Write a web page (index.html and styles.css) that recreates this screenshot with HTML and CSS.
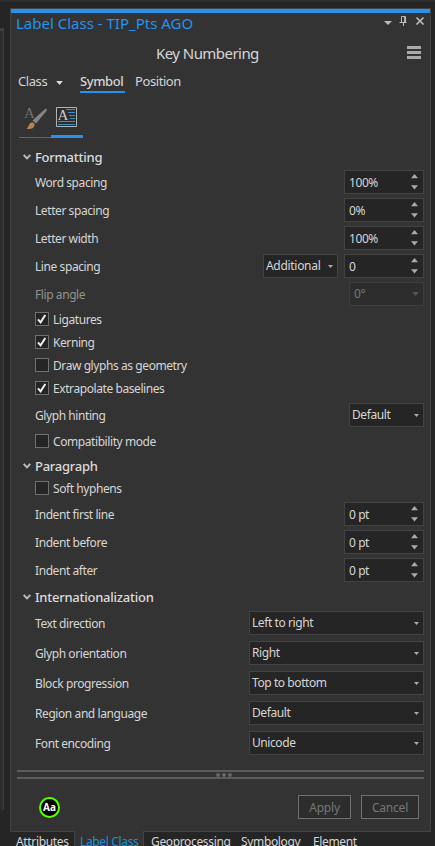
FILE: index.html
```html
<!DOCTYPE html>
<html lang="en">
<head>
<meta charset="utf-8">
<title>Label Class</title>
<link rel="stylesheet" href="styles.css">
</head>
<body>
<svg width="0" height="0" class="defs">
  <symbol id="down" viewBox="0 0 5 3"><path d="M0 0h5L2.5 3z"/></symbol>
  <symbol id="spin" viewBox="0 0 7 16"><path d="M3.5 0L7 4.3H0zM0 11.3h7L3.5 15.5z"/></symbol>
  <symbol id="chev" viewBox="0 0 8 6"><path d="M.7 .8L4 4.3 7.3 .8" fill="none" stroke="#bdbdbd" stroke-width="1.9"/></symbol>
  <symbol id="tick" viewBox="0 0 12 12"><path d="M2 6.3l2.6 3L9.3 2" fill="none" stroke="#f0f0f0" stroke-width="2"/></symbol>
</svg>
<div class="app">
<div class="rail"></div>
<div class="dock">
<main class="panel">
  <header class="title"><span class="title-text">Label Class - TIP_Pts AGO</span>
    <svg class="tools" width="42" height="14" viewBox="0 0 42 14"><path d="M0 7h8l-4 4z" fill="#bbb"/><path d="M17.5 2.5h4v6h-4zM15.500 8.500h7M19.500 8.500V12M20.600 2.500v6" fill="none" stroke="#bbb"/><path d="M32.500 3.500l7 7M39.500 3.500l-7 7" stroke="#bbb" stroke-width="1.7"/></svg>
  </header>
  <div class="subject"><span class="subject-text">Key Numbering</span>
    <svg class="burger" width="14" height="13"><path d="M0 1.5h14M0 6.5h14M0 11.5h14" stroke="#aaa" stroke-width="3"/></svg>
  </div>
  <nav class="menu"><span class="m-class">Class</span><svg class="m-arrow" width="7" height="4"><use href="#down"/></svg><span class="m-symbol">Symbol</span><span class="m-pos">Position</span></nav>
  <div class="icons">
    <div class="icon-tab">
      <svg width="32" height="34" viewBox="19 102 32 34"><text x="24" y="118" class="serif" font-size="15" fill="#707070">A</text><path d="M32.5 120.5L44.5 109.5 47 108.5 46.5 111 36 123.5z" fill="#858585"/><path d="M31.5 122.500c2-.5 3.500 1 3 3-.7 3-4 4-8 3.300 2.300-1.300 1.700-5.200 5-6.300z" fill="#b9834a"/></svg>
    </div>
    <div class="icon-tab on">
      <svg width="32" height="34" viewBox="51 102 32 34"><path d="M56.500 107.500h20v19h-20z" fill="#2d2d2d" stroke="#b4b4b4"/><text x="57.500" y="120" class="serif" font-size="15" fill="#ccc">A</text><path d="M66 109.500h9M68 112.500h7M69 115.500h6M70 118.500h5M58 121.500h17M58 124.500h17" stroke="#3a91c8"/></svg>
    </div>
  </div>

  <h2 class="sec first"><svg width="8" height="6"><use href="#chev"/></svg><span>Formatting</span></h2>
  <div class="row"><label>Word spacing</label><div class="box spin">100%<svg width="7" height="16"><use href="#spin"/></svg></div></div>
  <div class="row"><label>Letter spacing</label><div class="box spin">0%<svg width="7" height="16"><use href="#spin"/></svg></div></div>
  <div class="row"><label>Letter width</label><div class="box spin">100%<svg width="7" height="16"><use href="#spin"/></svg></div></div>
  <div class="row"><label>Line spacing</label><div class="box mode">Additional<svg width="5" height="3"><use href="#down"/></svg></div><div class="box spin">0<svg width="7" height="16"><use href="#spin"/></svg></div></div>
  <div class="row flip"><label>Flip angle</label><div class="box small">0°<svg width="7" height="4"><use href="#down"/></svg></div></div>
  <div class="check"><i><svg width="12" height="12"><use href="#tick"/></svg></i>Ligatures</div>
  <div class="check"><i><svg width="12" height="12"><use href="#tick"/></svg></i>Kerning</div>
  <div class="check"><i></i>Draw glyphs as geometry</div>
  <div class="check"><i><svg width="12" height="12"><use href="#tick"/></svg></i>Extrapolate baselines</div>
  <div class="row hint"><label>Glyph hinting</label><div class="box small">Default<svg width="5" height="3"><use href="#down"/></svg></div></div>
  <div class="check"><i></i>Compatibility mode</div>

  <h2 class="sec para"><svg width="8" height="6"><use href="#chev"/></svg><span>Paragraph</span></h2>
  <div class="check soft"><i></i>Soft hyphens</div>
  <div class="row"><label>Indent first line</label><div class="box spin">0 pt<svg width="7" height="16"><use href="#spin"/></svg></div></div>
  <div class="row"><label>Indent before</label><div class="box spin">0 pt<svg width="7" height="16"><use href="#spin"/></svg></div></div>
  <div class="row"><label>Indent after</label><div class="box spin">0 pt<svg width="7" height="16"><use href="#spin"/></svg></div></div>

  <h2 class="sec intl"><svg width="8" height="6"><use href="#chev"/></svg><span>Internationalization</span></h2>
  <div class="row tall"><label>Text direction</label><div class="box wide">Left to right<svg width="5" height="3"><use href="#down"/></svg></div></div>
  <div class="row tall"><label>Glyph orientation</label><div class="box wide">Right<svg width="5" height="3"><use href="#down"/></svg></div></div>
  <div class="row tall"><label>Block progression</label><div class="box wide">Top to bottom<svg width="5" height="3"><use href="#down"/></svg></div></div>
  <div class="row tall"><label>Region and language</label><div class="box wide">Default<svg width="5" height="3"><use href="#down"/></svg></div></div>
  <div class="row tall"><label>Font encoding</label><div class="box wide">Unicode<svg width="5" height="3"><use href="#down"/></svg></div></div>

  <div class="splitter"><b></b><b></b><b></b></div>
  <footer class="foot"><span class="badge">Aa</span><span class="btn apply">Apply</span><span class="btn cancel">Cancel</span></footer>
</main>
<div class="tabs"><span class="t1">Attributes</span><span class="t2">Label Class</span><span class="t3">Geoprocessing</span><span class="t4">Symbology</span><span class="t5">Element</span></div>
</div>
</div>
</body>
</html>
```
FILE: styles.css
```css
* { box-sizing: border-box; }
body { margin: 0; background: #252525; color: #d6d6d6; font: 12px/16px "Noto Sans", "Open Sans", sans-serif; letter-spacing: -0.42px; white-space: nowrap; }
.defs { position: absolute; }
svg { display: block; flex: none; }
.app { height: 846px; overflow: hidden; display: flex; border-top: 2px solid #2d2d2d; }
.rail { width: 4px; height: 782px; margin-top: 26px; background: #2d2d2d; border-right: 1px solid #3f3f46; border-top: 3px solid #3f3f46; flex: none; }
.dock { width: 421px; margin: 6px 0 0 6px; flex: none; }
.panel { height: 824px; background: #333; border: 1px solid #434346; }
.title { height: 26px; border-top: 4px solid #2492f0; display: flex; justify-content: space-between; padding: 0 4px 0 5px; color: #2492f0; }
.title-text { font-size: 15px; line-height: 21px; letter-spacing: 0; }
.tools { margin-top: 1px; }
.subject { height: 38px; display: flex; align-items: center; padding: 0 9px 0 145px; justify-content: space-between; }
.subject-text { font-size: 15px; letter-spacing: -0.55px; margin-top: -2px; }
.burger { margin-top: -3px; }
.menu { height: 25px; display: flex; font-size: 13px; line-height: 16px; padding-left: 7px; }
.m-class { width: 38px; }
.m-arrow { margin: 8px 17px 0 0; fill: #ddd; }
.m-symbol { width: 45px; height: 20px; border-bottom: 2px solid #2492f0; margin-right: 10px; font-weight: 500; }
.icons { height: 40px; display: flex; padding: 4px 0 0 8px; }
.icon-tab { width: 32px; height: 36px; border-bottom: 1px solid #666; }
.icon-tab.on { border-bottom: 3px solid #2492f0; }
.serif { font-family: "Liberation Serif", serif; }
.sec { margin: 0; display: flex; align-items: center; gap: 4px; padding-left: 12px; font-size: 13px; font-weight: 500; letter-spacing: -0.25px; color: #dcdcdc; }
.first { height: 32px; padding-top: 6px; }
.para { height: 24px; padding-top: 2px; }
.intl { height: 25px; padding-bottom: 3px; }
.row { height: 24px; margin-bottom: 4px; display: flex; align-items: center; gap: 6px; padding: 0 6px 0 24px; }
.row label { flex: 1; padding-top: 2px; }
.row.tall { margin-bottom: 6px; }
.box { height: 24px; border: 1px solid #434346; background: #252525; display: flex; align-items: center; justify-content: space-between; fill: #aaa; }
.spin { width: 80px; padding: 0 5px 0 4px; line-height: 24px; }
.spin svg { margin-top: -1px; }
.box.spin { padding-top: 1px; }
.mode { width: 75px; padding: 0 4px 0 2px; letter-spacing: -0.3px; }
.small { width: 75px; padding: 0 4px 0 2px; }
.wide { width: 175px; padding: 0 4px 0 2px; }
.flip { margin-bottom: 2px; color: #929292; }
.flip .box { background: #2d2d2d; border-color: #3e3e3e; color: #777; fill: #555; padding-left: 4px; }
.hint { margin: 3px 0; }
.check { height: 23px; padding: 4px 0 0 24px; display: flex; gap: 4px; line-height: 16px; }
.check i { width: 14px; height: 14px; border: 1px solid #707070; background: #252525; }
.soft { margin-bottom: 2px; }
.splitter { height: 9px; margin: 15px 6px 0; border-top: 2px solid #5c5c5c; border-bottom: 2px solid #5c5c5c; display: flex; justify-content: center; align-items: center; gap: 2px; padding-left: 6px; }
.splitter b { width: 4px; height: 4px; border-radius: 2px; background: #666; }
.foot { display: flex; padding: 16px 11px 0 28px; align-items: flex-start; }
.badge { width: 21px; height: 21px; margin: 2px auto 0 0; border: 2px solid #5cff00; border-radius: 50%; background: #000; color: #fff; font-weight: 700; font-size: 10px; line-height: 16px; text-align: center; letter-spacing: 0; }
.btn { height: 24px; border: 1px solid #707070; background: #2d2d2d; color: #777; text-align: center; line-height: 23px; letter-spacing: -0.2px; }
.apply { width: 53px; margin-right: 10px; }
.cancel { width: 58px; }
.tabs { display: flex; height: 15px; line-height: 20px; overflow: hidden; padding-left: 1px; margin-top: -1px; letter-spacing: -0.35px; }
.t1 { width: 64px; padding-left: 5px; border-right: 1px solid #434346; border-top: 1px solid #434346; }
.t2 { width: 69px; padding: 1px 0 0 5px; background: #333; color: #1e90d8; border-right: 1px solid #434346; }
.t3 { width: 90px; padding: 1px 0 0 7px; }
.t4 { width: 72px; padding: 1px 0 0 7px; }
.t5 { padding: 1px 0 0 7px; }
```
